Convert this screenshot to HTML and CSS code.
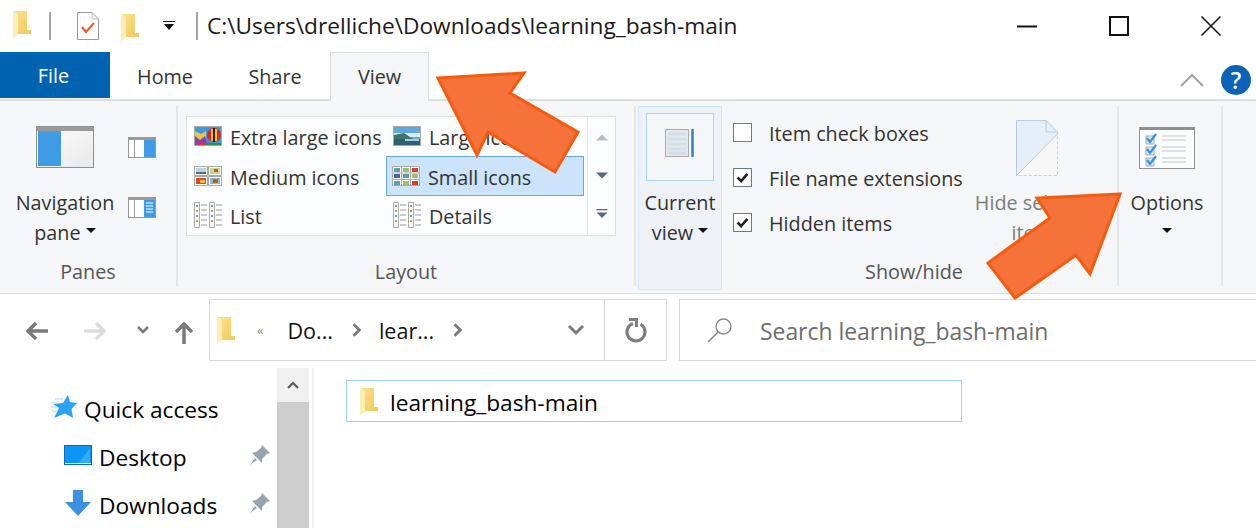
FILE: index.html
```html
<!DOCTYPE html>
<html>
<head>
  <title>learning_bash-main</title>
  <link rel="stylesheet" href="styles.css">
</head>
<body>
  <svg class="defs" width="0" height="0">
    <defs>
      <linearGradient id="fold" x1="0" y1="0" x2="1" y2="1">
        <stop offset="0" stop-color="#fbe48e"/>
        <stop offset="1" stop-color="#f2c458"/>
      </linearGradient>
      <linearGradient id="sheet" x1="0" y1="0" x2="1" y2="1">
        <stop offset="0" stop-color="#fdfdfd"/>
        <stop offset="1" stop-color="#e9e9e9"/>
      </linearGradient>
      <symbol id="folder" viewBox="0 0 20 28">
        <path d="M1 1 L15 1 L15 20 L19 20 L19 24 L6 24 L1 28 Z" fill="url(#fold)"/>
        <path d="M1 1 L6 4 L6 24 L1 28 Z" fill="#fdeeb5"/>
      </symbol>
      <symbol id="pin" viewBox="0 0 22 22">
        <path d="M13 1 L21 9 L18 10 L13 15 L13 19 L3 9 L7 8 L12 4 Z M6 14 L1 21 L8 16 Z" fill="#97a3ad"/>
      </symbol>
      <symbol id="thumbs4" viewBox="0 0 28 20">
        <rect width="28" height="20" fill="#fff"/>
        <path d="M.5.5h13v9h-13zM14.500.5h13v9h-13zM.5 10.500h13v9h-13zM14.500 10.500h13v9h-13z" fill="none" stroke="#aaa"/>
        <rect x="2" y="2" width="10" height="6" fill="#b6d6e4"/><rect x="2" y="6" width="10" height="2" fill="#4a7a74"/>
        <rect x="16" y="2" width="10" height="6" fill="#c9d98a"/><rect x="20" y="3" width="4" height="3" fill="#d9503a"/>
        <rect x="2" y="12" width="10" height="6" fill="#e2452c"/><rect x="6" y="14" width="5" height="3" fill="#f2c23c"/>
        <rect x="16" y="12" width="10" height="6" fill="#8fb8d8"/><rect x="19" y="13" width="5" height="4" fill="#a8691f"/>
      </symbol>
      <symbol id="thumbs9" viewBox="0 0 28 20">
        <rect width="28" height="20" fill="#fff"/>
        <path d="M.5.5h27v19H.5zM9.500.5v19M18.500.5v19M.5 7h27M.5 13.500h27" fill="none" stroke="#aaa"/>
        <path d="M2 2h6v4H2zM2 15h6v4H2zM11 8h6v4h-6z" fill="#5f9fa8"/>
        <path d="M11 2h6v4h-6zM20 8h6v4h-6zM11 15h6v4h-6z" fill="#9bbf6a"/>
        <path d="M20 2h6v4h-6zM20 15h6v4h-6z" fill="#d8402c"/>
        <path d="M2 8h6v4H2z" fill="#4a5fb0"/>
      </symbol>
      <symbol id="listing" viewBox="0 0 28 26">
        <path d="M.5.500h5v25h-5zM15.500.500h5v25h-5z" fill="#fff" stroke="#aaa"/>
        <path d="M2 3h2v2H2zM17 3h2v2h-2zM2 13h2v2H2zM17 13h2v2h-2z" fill="#5f9fa8"/>
        <path d="M2 8h2v2H2zM17 8h2v2h-2zM2 18h2v2H2zM17 18h2v2h-2z" fill="#b5a23c"/>
        <path d="M7 3h6M7 8h6M7 13h6M7 18h6M7 23h6M22 3h6M22 8h6M22 13h6M22 18h6M22 23h6" stroke="#999"/>
      </symbol>
      <symbol id="tick" viewBox="0 0 19 19">
        <path d="M4 9.500L8 13.500L15 5.500" fill="none" stroke="#222" stroke-width="3"/>
      </symbol>
    </defs>
  </svg>

  <div class="titlebar">
    <svg class="qat-folder"><use href="#folder"/></svg>
    <span class="qat-sep"></span>
    <svg class="qat-doc" viewBox="0 0 22 28">
      <path d="M.5.5H15L21.500 7V27.500H.5Z" fill="#fff" stroke="#9a9a9a"/>
      <path d="M15 .5V7H21.500" fill="none" stroke="#c4c4c4"/>
      <path d="M5 15L9 20L17 11" fill="none" stroke="#e8602c" stroke-width="2.200"/>
    </svg>
    <svg class="qat-folder2"><use href="#folder"/></svg>
    <svg class="qat-drop" viewBox="0 0 12 10">
      <path d="M0 0h12v1H0zM1 3h10L6 9z" fill="#111"/>
    </svg>
    <span class="qat-sep title-sep"></span>
    <span class="title">C:\Users\drelliche\Downloads\learning_bash-main</span>
    <div class="window-btns">
      <svg class="win-btn" viewBox="0 0 20 20"><path d="M0 10.500h20" stroke="#111" stroke-width="2"/></svg>
      <svg class="win-btn" viewBox="0 0 20 20"><rect x="1" y="1" width="18" height="18" fill="none" stroke="#111" stroke-width="2"/></svg>
      <svg class="win-btn" viewBox="0 0 20 20"><path d="M.5.5L19.500 19.500M19.500.5L.5 19.500" stroke="#111" stroke-width="1.500"/></svg>
    </div>
  </div>

  <div class="tabs">
    <div class="tab tab-file">File</div>
    <div class="tab">Home</div>
    <div class="tab">Share</div>
    <div class="tab tab-active">View</div>
    <div class="tabs-right">
      <svg class="collapse" viewBox="0 0 24 14"><path d="M1 13L12 2L23 13" fill="none" stroke="#a3a3a3" stroke-width="2"/></svg>
      <div class="help">?</div>
    </div>
  </div>

  <div class="ribbon">
    <div class="group group-panes">
      <div class="group-body panes-body">
        <div class="big-btn nav-pane">
          <svg class="icon-nav" viewBox="0 0 58 42">
            <rect x=".5" y=".5" width="57" height="41" fill="url(#sheet)" stroke="#8f8f8f"/>
            <rect x="1" y="1" width="56" height="4" fill="#9a9a9a"/>
            <rect x="2" y="5" width="23" height="35" fill="#3f9be4"/>
          </svg>
          <div class="big-text">Navigation</div>
          <div class="big-text">pane <span class="caret"></span></div>
        </div>
        <div class="pane-small">
          <svg class="icon-pane" viewBox="0 0 28 21">
            <rect x=".5" y=".5" width="27" height="20" fill="#fff" stroke="#999"/>
            <rect x="1" y="1" width="26" height="2" fill="#999"/>
            <rect x="6" y="3" width="1" height="17" fill="#999"/>
            <rect x="16" y="3" width="11" height="17" fill="#3f9be4"/>
          </svg>
          <svg class="icon-pane" viewBox="0 0 28 21">
            <rect x=".5" y=".5" width="27" height="20" fill="#fff" stroke="#999"/>
            <rect x="1" y="1" width="26" height="2" fill="#999"/>
            <rect x="6" y="3" width="1" height="17" fill="#999"/>
            <rect x="16" y="3" width="11" height="17" fill="#3f9be4"/>
            <path d="M18 6h7M18 9h7M18 12h7M18 15h7" stroke="#fff"/>
          </svg>
        </div>
      </div>
      <div class="group-label">Panes</div>
    </div>

    <div class="group group-layout">
      <div class="group-body">
        <div class="gallery">
          <div class="gallery-grid">
            <div class="gallery-item">
              <svg class="thumb" viewBox="0 0 28 20">
                <rect x=".5" y=".5" width="27" height="19" fill="#3f97e0" stroke="#aaa"/>
                <path d="M1 5L7 8L12 5V19H1Z" fill="#e8c93c"/>
                <path d="M1 10L6 14L11 10L14 19H1Z" fill="#8a3fb8"/>
                <path d="M4 19L8 15L12 19Z" fill="#d8342c"/>
                <rect x="12" y="17" width="15" height="2" fill="#2f8f3c"/>
                <circle cx="20" cy="9" r="7" fill="#d8281c"/>
                <path d="M17 3h6v12h-6z" fill="#f0c020"/>
                <path d="M19 2h2v14h-2z" fill="#2a1a10"/>
              </svg>
              Extra large icons
            </div>
            <div class="gallery-item">
              <svg class="thumb" viewBox="0 0 28 20">
                <rect x=".5" y=".5" width="27" height="19" fill="#5fa8dc" stroke="#aaa"/>
                <path d="M1 7h26v4H1z" fill="#dcecf4"/>
                <path d="M1 9L11 7L20 13H1Z" fill="#3f7468"/>
                <rect x="1" y="13" width="26" height="6" fill="#2e5f70"/>
                <path d="M12 13h14v2H12z" fill="#a8ccd8"/>
              </svg>
              Large icons
            </div>
            <div class="gallery-item">
              <svg class="thumb"><use href="#thumbs4"/></svg>
              Medium icons
            </div>
            <div class="gallery-item gallery-item-on">
              <svg class="thumb"><use href="#thumbs9"/></svg>
              Small icons
            </div>
            <div class="gallery-item">
              <svg class="thumb thumb-tall"><use href="#listing"/></svg>
              List
            </div>
            <div class="gallery-item">
              <svg class="thumb thumb-tall"><use href="#listing"/></svg>
              Details
            </div>
          </div>
          <div class="gallery-scroll">
            <svg class="scroll-arrow" viewBox="0 0 12 8"><path d="M0 7L6 1L12 7Z" fill="#b4bcc8"/></svg>
            <svg class="scroll-arrow" viewBox="0 0 12 8"><path d="M0 1L6 7L12 1Z" fill="#57687f"/></svg>
            <svg class="scroll-arrow" viewBox="0 0 12 10"><path d="M0 0h12v1.500H0zM0 4L6 10L12 4Z" fill="#57687f"/></svg>
          </div>
        </div>
      </div>
      <div class="group-label">Layout</div>
    </div>

    <div class="group group-show">
      <div class="current-view">
        <div class="current-icon">
          <svg class="icon-current" viewBox="0 0 30 30">
            <rect x=".5" y="1.500" width="23" height="27" fill="#e4e6e8" stroke="#aaa"/>
            <path d="M3 6h18M3 11h18M3 16h18M3 21h18M3 25h18" stroke="#cfdfea" stroke-width="2.500"/>
            <path d="M27.500 2v26" stroke="#2a7fd0" stroke-width="2.500" stroke-linecap="round"/>
          </svg>
        </div>
        <div class="big-text">Current</div>
        <div class="big-text">view <span class="caret"></span></div>
      </div>
      <div class="show-main">
        <div class="show-top">
          <div class="checks">
            <div class="check-row"><span class="checkbox"></span>Item check boxes</div>
            <div class="check-row"><svg class="checkbox"><use href="#tick"/></svg>File name extensions</div>
            <div class="check-row"><svg class="checkbox"><use href="#tick"/></svg>Hidden items</div>
          </div>
          <div class="big-btn hide-sel">
            <svg class="icon-hide" viewBox="0 0 42 56">
              <path d="M.5.5H30L41.500 12V55.500H.5Z" fill="#fff" fill-opacity=".2" stroke="#c3d0e2" stroke-dasharray="3 2"/>
              <path d="M.5 55.500V.5H30L41.500 12V14Z" fill="#e6eef9" stroke="#b8c9e0"/>
              <path d="M30 1V12H41" fill="none" stroke="#b8c9e0"/>
            </svg>
            <div class="big-text muted">Hide selected</div>
            <div class="big-text muted">items</div>
          </div>
        </div>
        <div class="group-label">Show/hide</div>
      </div>
    </div>

    <div class="group group-options">
      <div class="big-btn">
        <svg class="icon-options" viewBox="0 0 56 42">
          <rect x=".5" y=".5" width="55" height="41" fill="#fbfcfd" stroke="#8f8f8f"/>
          <rect x="1" y="1" width="54" height="2" fill="#8f8f8f"/>
          <path d="M7 9h8v8H7zM7 20h8v8H7zM7 31h8v8H7z" fill="#e8e8e8" stroke="#aaa"/>
          <path d="M8 11L11 15L17 7M8 22L11 26L17 18M8 33L11 37L17 29" fill="none" stroke="#2a95e8" stroke-width="2.200"/>
          <path d="M23 9h24M23 13h24M23 20h24M23 24h24M23 31h24M23 35h24" stroke="#c4c4c4"/>
        </svg>
        <div class="big-text">Options</div>
        <div class="big-text"><span class="caret caret-solo"></span></div>
      </div>
    </div>
  </div>

  <div class="navbar">
    <svg class="nav-icon nav-back" viewBox="0 0 22 18"><path d="M10 1L2 9L10 17M2 9H22" fill="none" stroke="#7a7a7a" stroke-width="3.500"/></svg>
    <svg class="nav-icon nav-forward" viewBox="0 0 22 18"><path d="M12 1L20 9L12 17M20 9H0" fill="none" stroke="#dcdcdc" stroke-width="3.500"/></svg>
    <svg class="nav-recent" viewBox="0 0 12 8"><path d="M1 1L6 6L11 1" fill="none" stroke="#7a7a7a" stroke-width="2.500"/></svg>
    <svg class="nav-up" viewBox="0 0 18 22"><path d="M1 10L9 2L17 10M9 2V22" fill="none" stroke="#7a7a7a" stroke-width="3.500"/></svg>
    <div class="crumbs">
      <svg class="crumb-folder"><use href="#folder"/></svg>
      <span class="crumb-more">&laquo;</span>
      <span class="crumb crumb-first">Do...</span>
      <svg class="crumb-chev" viewBox="0 0 8 12"><path d="M1 1L6 6L1 11" fill="none" stroke="#7a7a7a" stroke-width="2.500"/></svg>
      <span class="crumb">lear...</span>
      <svg class="crumb-chev" viewBox="0 0 8 12"><path d="M1 1L6 6L1 11" fill="none" stroke="#7a7a7a" stroke-width="2.500"/></svg>
      <svg class="crumb-down" viewBox="0 0 18 12"><path d="M2 2L9 9L16 2" fill="none" stroke="#7a7a7a" stroke-width="3"/></svg>
      <div class="refresh">
        <svg class="refresh-icon" viewBox="0 0 22 26">
          <path d="M15.500 7.200A9 9 0 1 1 8 6.500" fill="none" stroke="#7f7f7f" stroke-width="3.200"/>
          <path d="M4 2.500H11.500V10" fill="none" stroke="#7f7f7f" stroke-width="3"/>
        </svg>
      </div>
    </div>
    <div class="search">
      <svg class="search-icon" viewBox="0 0 26 26">
        <circle cx="16.500" cy="9.500" r="7.500" fill="none" stroke="#8a8a8a" stroke-width="1.400"/>
        <path d="M11 15L1 25" stroke="#8a8a8a" stroke-width="1.600"/>
      </svg>
      <span class="search-text">Search learning_bash-main</span>
    </div>
  </div>

  <div class="explorer">
    <div class="sidebar">
      <div class="tree">
        <div class="tree-row tree-quick">
          <svg class="tree-icon" viewBox="0 0 28 24">
            <path d="M18 0L20 7L27 8L21.500 14L23 23L15 18.500L4 23L9 13L3 9L13 8Z" fill="#2ba3f5"/>
            <path d="M5 4h8M1 8h5M0 12h7M2 16h6" stroke="#a8d8f8"/>
          </svg>
          Quick access
        </div>
        <div class="tree-row">
          <svg class="tree-icon" viewBox="0 0 28 20">
            <rect x=".5" y=".5" width="27" height="19" fill="#0a96f2" stroke="#0a6cc0"/>
            <path d="M14 19L26 3V19Z" fill="#35aaf7"/>
            <rect x="1" y="18" width="26" height="1" fill="#d8eefc"/>
          </svg>
          Desktop
          <svg class="pin"><use href="#pin"/></svg>
        </div>
        <div class="tree-row">
          <svg class="tree-icon tree-icon-down" viewBox="0 0 26 26">
            <path d="M8 0H18V12H26L13 26L0 12H8Z" fill="#3b90e2"/>
          </svg>
          Downloads
          <svg class="pin"><use href="#pin"/></svg>
        </div>
      </div>
      <div class="scrollbar">
        <div class="scroll-up">
          <svg class="scroll-up-icon" viewBox="0 0 12 8"><path d="M1 7L6 2L11 7" fill="none" stroke="#555" stroke-width="2"/></svg>
        </div>
        <div class="scroll-thumb"></div>
      </div>
    </div>
    <div class="content">
      <div class="file-row">
        <svg class="file-folder"><use href="#folder"/></svg>
        learning_bash-main
      </div>
    </div>
  </div>

  <svg class="arrows" viewBox="0 0 1256 528">
    <polygon points="438,78 524,73 510,93 578,132 555,172 488,132 477,155"/>
    <polygon points="1120,194 1037,198 1050,218 988,263 1015,298 1076,255 1090,274"/>
  </svg>
</body>
</html>
```

FILE: styles.css
```css
body {
  margin: 0;
  width: 1256px;
  height: 528px;
  overflow: hidden;
  position: relative;
  background: #fff;
  color: #1a1a1a;
  font-family: "Open Sans", "Liberation Sans", sans-serif;
  font-size: 19.8px;
}
svg {
  display: block;
  flex: none;
}
.defs {
  position: absolute;
}

/* title bar */
.titlebar {
  height: 52px;
  display: flex;
  align-items: center;
}
.qat-folder {
  width: 20px;
  height: 28px;
  margin: -4px 0 0 12px;
}
.qat-sep {
  width: 2px;
  height: 28px;
  margin-left: 17px;
  background: #a6a6a6;
}
.qat-doc {
  width: 22px;
  height: 28px;
  margin-left: 26px;
}
.qat-folder2 {
  width: 20px;
  height: 28px;
  margin: 2px 0 0 21px;
}
.qat-drop {
  width: 12px;
  height: 10px;
  margin-left: 23px;
}
.title-sep {
  margin-left: 21px;
}
.title {
  margin: -2px 0 0 9px;
  font-size: 22.7px;
  white-space: nowrap;
}
.window-btns {
  margin-left: auto;
  margin-right: 35px;
  display: flex;
  gap: 72px;
}
.win-btn {
  width: 20px;
  height: 20px;
}

/* tabs */
.tabs {
  height: 47px;
  display: flex;
  border-bottom: 2px solid #dcdddf;
  color: #333;
}
.tab {
  width: 110px;
  height: 46px;
  line-height: 50px;
  text-align: center;
}
.tab-file {
  padding-right: 3px;
  width: 107px;
  background: #0063b1;
  color: #fff;
  line-height: 48px;
}
.tab-active {
  height: 49px;
  background: #f5f6f7;
  border: 1px solid #dcdddf;
  border-bottom: none;
  box-sizing: border-box;
  width: 99px;
  line-height: 48px;
}
.tabs-right {
  margin-left: auto;
  display: flex;
  align-items: center;
  gap: 17px;
  padding: 9px 5px 0 0;
}
.collapse {
  width: 24px;
  height: 14px;
}
.help {
  width: 30px;
  height: 30px;
  border-radius: 50%;
  background: #0a63b8;
  color: #fff;
  font-size: 23px;
  font-weight: 600;
  line-height: 30px;
  text-align: center;
}

/* ribbon */
.ribbon {
  height: 180px;
  padding: 5px 0 7px;
  display: flex;
  background: #f5f6f7;
  border-bottom: 1px solid #dcdddf;
  color: #333;
}
.group {
  height: 180px;
  display: flex;
  flex-direction: column;
  border-right: 2px solid #e3e5e8;
  box-sizing: border-box;
}
.group-body {
  flex: 1;
}
.group-label {
  height: 28px;
  line-height: 28px;
  text-align: center;
  color: #555;
}
.group-panes {
  width: 178px;
}
.panes-body {
  display: flex;
}
.big-btn {
  display: flex;
  flex-direction: column;
  align-items: center;
}
.big-text {
  height: 30px;
  line-height: 30px;
  white-space: nowrap;
}
.muted {
  color: #7d7d7d;
}
.caret {
  display: inline-block;
  width: 0;
  height: 0;
  border: 5px solid transparent;
  border-top: 5px solid #111;
  border-bottom: none;
  vertical-align: 7px;
}
.caret-solo {
  vertical-align: 7px;
}
.nav-pane {
  width: 130px;
  margin-right: -2px;
}
.icon-nav {
  width: 58px;
  height: 42px;
  margin: 20px 0;
}
.pane-small {
  padding-top: 31px;
}
.icon-pane {
  width: 28px;
  height: 21px;
  margin-bottom: 39px;
}

/* layout gallery */
.group-layout {
  width: 458px;
  padding-left: 8px;
}
.group-layout .group-body {
  padding-top: 10px;
}
.group-layout .group-label {
  padding-right: 8px;
}
.gallery {
  width: 430px;
  height: 120px;
  box-sizing: border-box;
  display: flex;
  background: #fcfdfe;
  border: 1px solid #dcdfe3;
}
.gallery-grid {
  display: grid;
  grid-template-columns: 199px 198px;
  grid-template-rows: 39px 40px 39px;
  margin-right: 3px;
}
.gallery-item {
  display: flex;
  align-items: center;
  gap: 8px;
  padding: 2px 0 0 7px;
  box-sizing: border-box;
  white-space: nowrap;
}
.gallery-item-on {
  padding-left: 5px;
  background: #cce4fb;
  border: 1px solid #66a7e8;
}
.thumb {
  width: 28px;
  height: 20px;
  margin-top: -3px;
}
.thumb-tall {
  height: 26px;
}
.gallery-scroll {
  flex: 1;
  display: flex;
  flex-direction: column;
  align-items: center;
  gap: 29px;
  padding-top: 16px;
  border-left: 1px solid #e3e5e8;
}
.scroll-arrow {
  width: 12px;
  height: 9px;
}

/* show/hide */
.group-show {
  width: 483px;
  flex-direction: row;
  padding-left: 2px;
}
.current-view {
  width: 84px;
  height: 184px;
  margin-right: 11px;
  box-sizing: border-box;
  padding-top: 6px;
  display: flex;
  flex-direction: column;
  align-items: center;
  background: #eef2f7;
  border: 1px solid #cde6fb;
}
.current-icon {
  width: 68px;
  height: 68px;
  margin-bottom: 7px;
  box-sizing: border-box;
  display: flex;
  align-items: center;
  justify-content: center;
  background: #f5f6f7;
  border: 1px solid #a8d5f8;
}
.icon-current {
  width: 30px;
  height: 30px;
  margin-bottom: 8px;
}
.show-main {
  flex: 1;
  display: flex;
  flex-direction: column;
}
.show-top {
  flex: 1;
  display: flex;
}
.checks {
  width: 243px;
  padding-top: 4px;
}
.check-row {
  height: 45px;
  padding-top: 2px;
  box-sizing: border-box;
  display: flex;
  align-items: center;
  white-space: nowrap;
}
.checkbox {
  width: 19px;
  height: 19px;
  margin: -2px 17px 0 0;
  box-sizing: border-box;
  background: #fff;
  border: 1px solid #6d7b8d;
}
.hide-sel {
  width: 122px;
}
.icon-hide {
  width: 42px;
  height: 56px;
  margin: 14px 0 12px;
}
.show-main .group-label {
  padding-right: 22px;
}

/* options */
.group-options {
  width: 104px;
  padding-right: 6px;
  align-items: center;
}
.icon-options {
  width: 56px;
  height: 42px;
  margin: 21px 0 19px;
}

/* address bar */
.navbar {
  height: 72px;
  margin-bottom: 2px;
  display: flex;
  align-items: center;
  color: #111;
}
.nav-icon {
  width: 22px;
  height: 18px;
}
.nav-back {
  margin-left: 26px;
  margin-top: 2px;
}
.nav-forward {
  margin-left: 36px;
  margin-top: 2px;
}
.nav-recent {
  width: 12px;
  height: 8px;
  margin-left: 31px;
}
.nav-up {
  width: 18px;
  height: 22px;
  margin-left: 26px;
  margin-top: 5px;
}
.crumbs {
  width: 458px;
  height: 62px;
  margin-left: 16px;
  box-sizing: border-box;
  display: flex;
  align-items: center;
  background: #fff;
  border: 1px solid #d9d9d9;
}
.crumb-folder {
  width: 20px;
  height: 28px;
  margin-left: 6px;
}
.crumb-more {
  margin-left: 21px;
  font-size: 13px;
  color: #888;
}
.crumb {
  font-size: 21.5px;
}
.crumb-first {
  margin-left: 24px;
}
.crumb-chev {
  width: 10px;
  height: 14px;
  margin: 0 17px 0 19px;
}
.crumb-down {
  width: 18px;
  height: 12px;
  margin-left: 87px;
}
.refresh {
  width: 62px;
  height: 100%;
  margin-left: auto;
  display: flex;
  align-items: center;
  justify-content: center;
  border-left: 1px solid #d9d9d9;
  box-sizing: border-box;
}
.refresh-icon {
  width: 22px;
  height: 26px;
}
.search {
  flex: 1;
  height: 62px;
  margin-left: 12px;
  box-sizing: border-box;
  display: flex;
  align-items: center;
  background: #fff;
  border: 1px solid #d9d9d9;
  border-right: none;
}
.search-icon {
  width: 26px;
  height: 26px;
  margin-left: 27px;
}
.search-text {
  margin: 2px 0 0 27px;
  color: #6d6d6d;
  font-size: 22.9px;
}

/* tree and file list */
.explorer {
  display: flex;
  height: 160px;
  font-size: 22.7px;
}
.sidebar {
  width: 314px;
  box-sizing: border-box;
  display: flex;
  border-right: 2px solid #f2f2f2;
}
.tree {
  width: 277px;
  padding-top: 17px;
  color: #000;
}
.tree-row {
  height: 48px;
  display: flex;
  align-items: center;
  gap: 7px;
  padding-left: 64px;
  white-space: nowrap;
}
.tree-quick {
  padding-left: 50px;
  gap: 6px;
}
.tree-icon {
  width: 28px;
  height: 24px;
  margin-top: -4px;
}
.tree-icon-down {
  width: 26px;
  height: 26px;
  margin: -4px 1px 0 1px;
}
.pin {
  width: 22px;
  height: 22px;
  margin: -4px 6px 0 auto;
}
.scrollbar {
  width: 32px;
  background: #cdcdcd;
}
.scroll-up {
  height: 34px;
  display: flex;
  align-items: center;
  justify-content: center;
  background: #f0f0f0;
}
.scroll-up-icon {
  width: 12px;
  height: 8px;
}
.content {
  padding: 12px 0 0 32px;
}
.file-row {
  width: 616px;
  height: 42px;
  box-sizing: border-box;
  display: flex;
  align-items: center;
  gap: 11px;
  padding: 2px 0 0 12px;
  color: #000;
  border: 1px solid #99d1ff;
}
.file-folder {
  width: 20px;
  height: 28px;
  margin-top: -2px;
}

/* callout arrows */
.arrows {
  position: absolute;
  left: 0;
  top: 0;
  width: 1256px;
  height: 528px;
}
.arrows polygon {
  fill: #f5733a;
  stroke: #f55a0f;
  stroke-width: 3;
}
```
